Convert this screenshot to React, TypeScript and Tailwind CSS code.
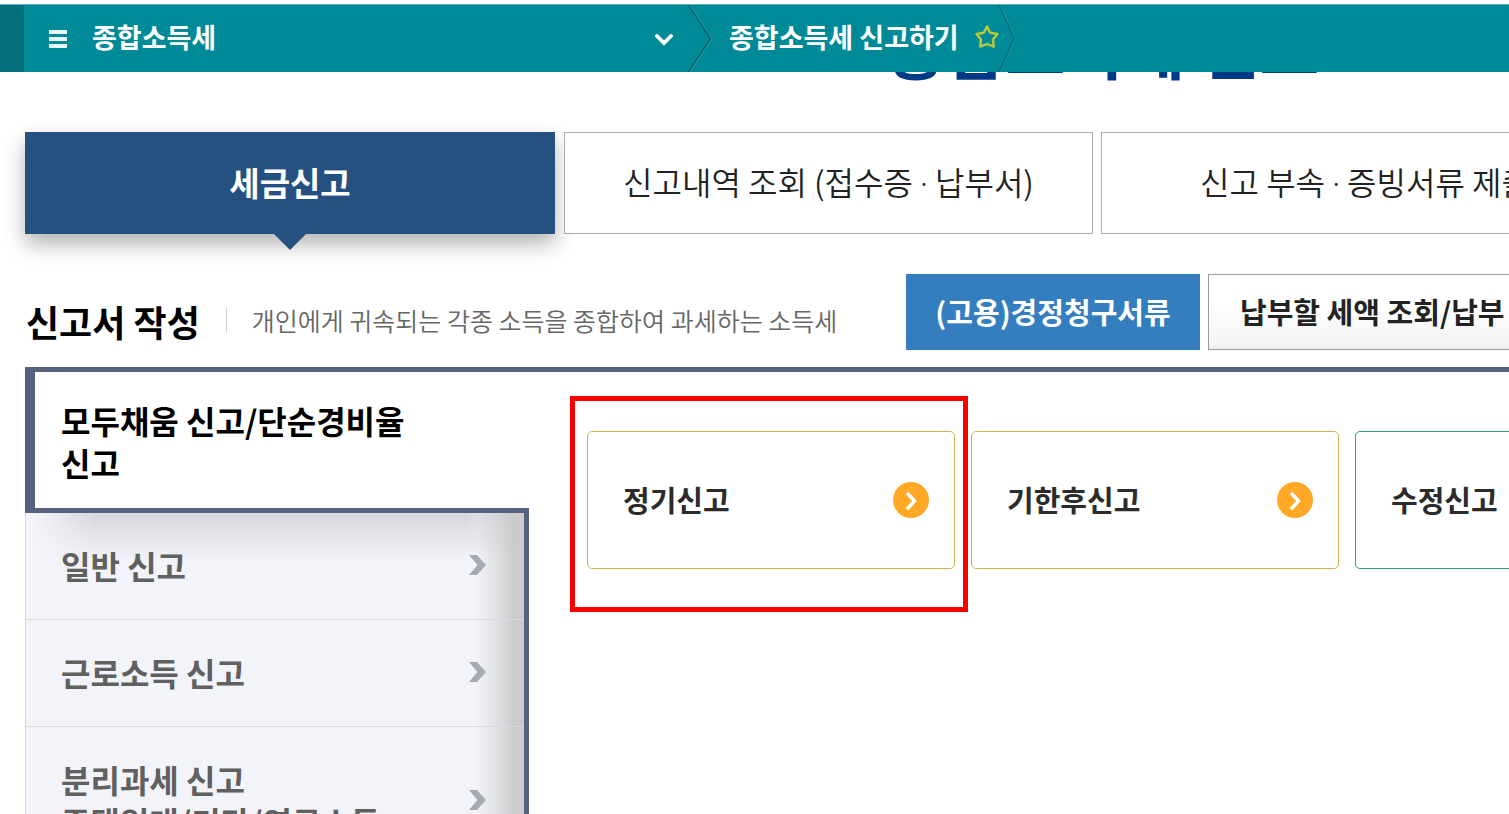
import React from "react";

const taxTabs = [
  ["신고내역 조회 (접수증", "납부서)"],
  ["신고 부속", "증빙서류 제출"],
];

const sideItems: string[][] = [
  ["일반 신고"],
  ["근로소득 신고"],
  ["분리과세 신고", "주택임대/기타/연금소득"],
];

function CrumbDivider({ className }: { className: string }) {
  return (
    <svg
      viewBox="0 0 24 68"
      preserveAspectRatio="none"
      fill="none"
      aria-hidden="true"
      className={className}
    >
      <path d="M2 0 L24 34 L2 68" stroke="#3fa4ac" strokeWidth="0.8" />
      <path d="M0.5 0 L22.5 34 L0.5 68" stroke="#04646e" strokeWidth="1.5" />
    </svg>
  );
}

function TopBar() {
  return (
    <header className="relative z-10 mt-1 flex h-[68px] items-stretch border-t border-[#5fb0b8] bg-[#008a97] text-white">
      <div className="w-6 shrink-0 bg-[#036f7b]" />
      <button
        type="button"
        className="flex w-[664px] shrink-0 items-center pl-[25px] pr-[15px] text-left text-[27px] leading-8 font-bold"
      >
        <svg width="18" height="18" viewBox="0 0 18 18" aria-hidden="true" className="mr-[25px]">
          <path d="M0 0h18v4H0zM0 7h18v4H0zM0 14h18v4H0z" fill="#e8f6f6" />
        </svg>
        <span className="grow pb-1">종합소득세</span>
        <svg width="18" height="14" viewBox="0 0 18 14" fill="none" aria-hidden="true">
          <path d="M2 4 L9 11 L16 4" stroke="#fff" strokeWidth="3.8" strokeLinecap="round" />
        </svg>
      </button>
      <CrumbDivider className="h-full w-6 shrink-0" />
      <div className="flex items-center gap-4 pb-1 pl-[17px]">
        <a href="#report" className="text-[27px] leading-8 font-bold whitespace-nowrap">
          종합소득세 신고하기
        </a>
        <button type="button" aria-label="즐겨찾기">
          <svg width="24" height="24" viewBox="0 0 24 24" fill="none" aria-hidden="true">
            <path
              d="M12 1.6 L15.2 7.8 L22.4 9 L18 14.4 L18.8 21.6 L12 19 L5.2 21.6 L6 14.4 L1.6 9 L8.8 7.8 Z"
              stroke="#b9cb3a"
              strokeWidth="2.4"
              strokeLinejoin="round"
            />
          </svg>
        </button>
      </div>
      <CrumbDivider className="h-full w-4 shrink-0" />
    </header>
  );
}

function TaxTabs() {
  return (
    <nav className="mt-[54px] flex h-[102px] gap-2 pl-[25px]">
      <button
        type="button"
        className="relative mr-px w-[530px] shrink-0 bg-[#265080] text-[33px] font-bold text-white shadow-[0_10px_20px_rgba(0,0,0,0.3)]"
      >
        세금신고
        <svg
          width="32"
          height="16"
          viewBox="0 0 32 16"
          aria-hidden="true"
          className="absolute top-full left-1/2 -translate-x-1/2"
        >
          <path d="M0 0H32L16 16Z" fill="#265080" />
        </svg>
      </button>
      {taxTabs.map(([before, after]) => (
        <button
          key={before}
          type="button"
          className="relative w-[529px] shrink-0 border border-[#adadad] bg-white pb-0.5 text-[32px] font-[350] whitespace-nowrap text-[#222]"
        >
          {before} <span className="font-['Noto_Sans',sans-serif]">·</span> {after}
        </button>
      ))}
    </nav>
  );
}

function SectionHeading() {
  return (
    <div className="mt-10 flex h-[76px] items-center pl-[26px]">
      <h2 className="shrink-0 pt-[18px] text-[36px] leading-10 font-bold text-black">신고서 작성</h2>
      <p className="mt-4 ml-[26px] shrink-0 border-l border-[#cfcfcf] pl-[25px] text-[25px] leading-6 font-[350] whitespace-nowrap text-[#666]">
        개인에게 귀속되는 각종 소득을 종합하여 과세하는 소득세
      </p>
      <div className="ml-auto flex h-full w-[603px] shrink-0 gap-2">
        <button
          type="button"
          className="w-[294px] shrink-0 bg-[#347dbf] text-[29px] font-bold text-white"
        >
          (고용)경정청구서류
        </button>
        <button
          type="button"
          className="shrink-0 border border-[#999] bg-linear-to-b from-white from-40% to-[#f1f1f1] px-[31px] text-[29px] font-bold whitespace-nowrap text-[#222]"
        >
          납부할 세액 조회/납부
        </button>
      </div>
    </div>
  );
}

function SideMenu() {
  return (
    <aside className="w-[504px] shrink-0 text-[32px] leading-[42px] font-bold">
      <a
        href="#simple"
        className="relative block border-b-[5px] border-l-10 border-[#556380] bg-white pt-[27px] pr-[100px] pb-[25px] pl-[26px] text-black"
      >
        모두채움 신고/단순경비율 신고
      </a>
      <div className="relative border-r-[5px] border-l border-r-[#556380] border-l-[#d5d6da] bg-[#f3f4fa] text-[#606060]">
        <div className="pointer-events-none absolute inset-y-0 right-0 w-12 bg-linear-to-r from-transparent via-[#dcdde0] to-[#cbcbcb] to-80%" />
        <div className="pointer-events-none absolute top-0 right-0 left-0 h-12 bg-linear-to-b from-black/12 to-transparent [mask-image:linear-gradient(to_right,transparent_8px,black_70px,black_440px,transparent_490px)]" />
        {sideItems.map((lines) => (
          <a
            key={lines[0]}
            href="#menu"
            className="relative flex items-center justify-between border-b border-[#d8d9dd] pt-[31px] pr-[38px] pb-[33px] pl-[35px]"
          >
            <span>
              {lines.map((line) => (
                <span key={line} className="block whitespace-nowrap">
                  {line}
                </span>
              ))}
            </span>
            <svg width="17" height="20" viewBox="0 0 17 20" aria-hidden="true">
              <path d="M0 0H8L17 10L8 20H0L8.5 10Z" fill="#a6a9b3" />
            </svg>
          </a>
        ))}
      </div>
    </aside>
  );
}

function CircleArrow({ color }: { color: string }) {
  return (
    <svg width="36" height="36" viewBox="0 0 36 36" fill="none" aria-hidden="true">
      <circle cx="18" cy="18" r="18" fill={color} />
      <path
        d="M15 12 L21.5 19 L15 26"
        stroke="#fff"
        strokeWidth="3.6"
        strokeLinecap="round"
        strokeLinejoin="round"
      />
    </svg>
  );
}

const cardBase =
  "flex h-[138px] w-[368px] items-center justify-between rounded-[5px] border bg-white pr-[25px] pl-[35px] text-[29px] font-bold text-[#2b2b2b]";

function ReportCards() {
  return (
    <div className="flex items-start gap-4 pt-[59px] pl-[58px]">
      <div className="relative shrink-0">
        <a href="#regular" className={`${cardBase} border-[#d0b154]`}>
          정기신고
          <CircleArrow color="#ffa824" />
        </a>
        <div className="pointer-events-none absolute -top-[35px] -right-[13px] -bottom-[43px] -left-[17px] border-[5px] border-[#fb0000]" />
      </div>
      <a href="#late" className={`${cardBase} shrink-0 border-[#d0b154]`}>
        기한후신고
        <CircleArrow color="#ffa824" />
      </a>
      <a href="#amended" className={`${cardBase} shrink-0 border-[#2fa56f]`}>
        수정신고
        <CircleArrow color="#2fa56f" />
      </a>
    </div>
  );
}

export default function App() {
  return (
    <div className="flex h-screen flex-col overflow-hidden bg-white font-['Noto_Sans_CJK_KR',sans-serif]">
      <div className="shrink-0">
        <TopBar />
        <h1 className="-mt-[58px] pl-[886px] text-[65px] leading-[64px] font-bold whitespace-nowrap text-[#003a86]">
          종합소득세 신고
        </h1>
        <TaxTabs />
        <SectionHeading />
        <main className="mt-[17px] ml-[25px] flex border-t-[5px] border-[#556380]">
          <SideMenu />
          <ReportCards />
        </main>
      </div>
    </div>
  );
}
